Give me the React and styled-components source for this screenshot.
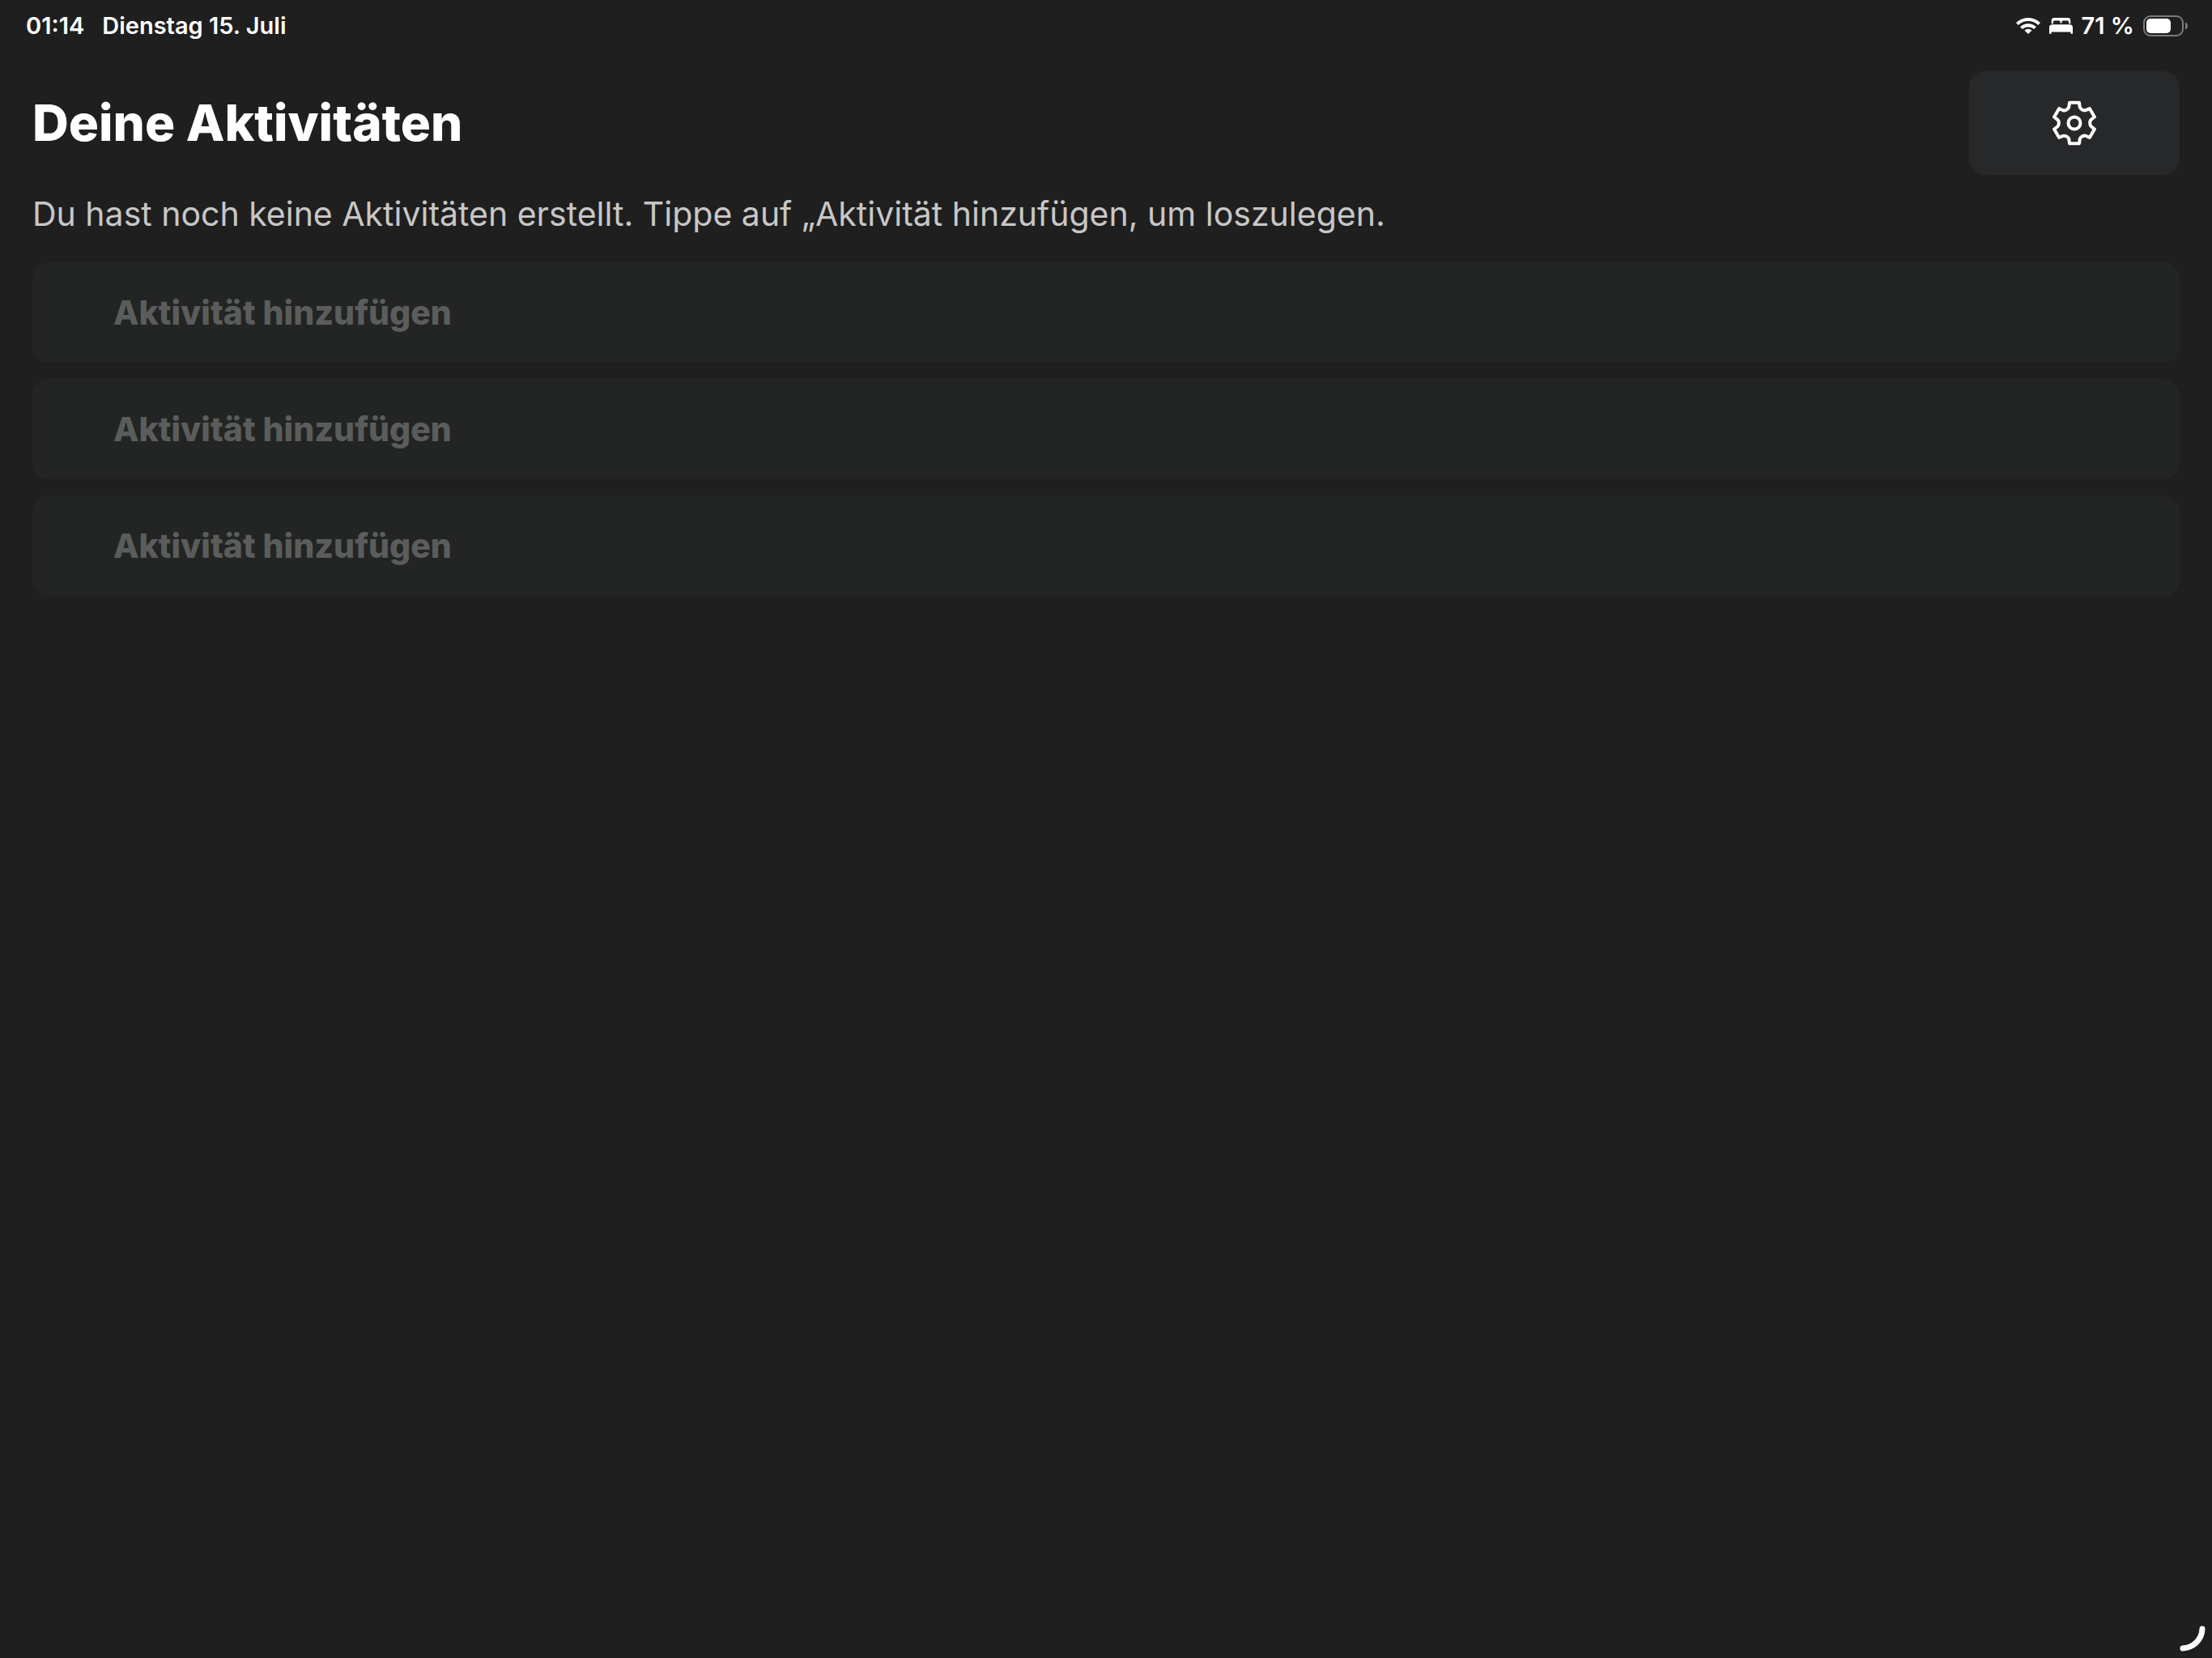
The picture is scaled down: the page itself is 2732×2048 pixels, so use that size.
import React from "react";
import styled, { createGlobalStyle } from "styled-components";

const GlobalStyle = createGlobalStyle`
  *, *::before, *::after { box-sizing: border-box; }
  body {
    margin: 0;
    background: #1f1f1f;
    color: #ffffff;
    font-family: Inter, "Open Sans", sans-serif;
    -webkit-font-smoothing: antialiased;
  }
`;

const Page = styled.div`
  min-height: 100vh;
  display: flex;
  flex-direction: column;
`;

const StatusBar = styled.header`
  display: flex;
  justify-content: space-between;
  align-items: center;
  height: 64px;
  padding: 0 30px 0 32px;
  font-size: 29px;
  font-weight: 600;
  line-height: 32px;
`;

const StatusGroup = styled.div`
  display: flex;
  align-items: center;
  gap: ${(p) => p.$gap}px;
`;

const Main = styled.main`
  display: flex;
  flex-direction: column;
  padding: 24px 40px 0;
`;

const TitleRow = styled.div`
  display: flex;
  justify-content: space-between;
  align-items: center;
`;

const Title = styled.h1`
  margin: 0;
  font-size: 62px;
  font-weight: 800;
  line-height: 72px;
`;

const SettingsButton = styled.button`
  display: flex;
  align-items: center;
  justify-content: center;
  width: 260px;
  height: 128px;
  padding: 0;
  border: 0;
  border-radius: 20px;
  background: #27282a;
  color: inherit;
`;

const Hint = styled.p`
  margin: 16px 0 28px;
  color: #c7c7c7;
  font-size: 41px;
  font-weight: 400;
  line-height: 64px;
`;

const ActivityList = styled.ul`
  display: flex;
  flex-direction: column;
  gap: 20px;
  margin: 0;
  padding: 0;
  list-style: none;
`;

const ActivityButton = styled.button`
  display: block;
  width: 100%;
  height: 124px;
  padding: 0 100px;
  border: 0;
  border-radius: 20px;
  background: #232524;
  color: #5b5d5c;
  font-family: inherit;
  font-size: 41px;
  font-weight: 800;
  line-height: 64px;
  text-align: left;
`;

const Footer = styled.footer`
  display: flex;
  justify-content: flex-end;
  margin-top: auto;
  padding: 0 8px 8px;
`;

const WifiIcon = () => (
  <svg width="30" height="20" viewBox="0 0 30 20" fill="none" stroke="#fff" strokeWidth="4" aria-hidden="true">
    <path d="M1.4 7.6a19.3 19.3 0 0 1 27.2 0" />
    <path d="M6.4 12.7a12.2 12.2 0 0 1 17.2 0" />
    <path d="M15 20l-4.600-4.400a6.500 6.500 0 0 1 9.200 0z" fill="#fff" stroke="none" />
  </svg>
);

const BedIcon = () => (
  <svg width="29" height="20" viewBox="0 0 29 20" fill="#fff" aria-hidden="true">
    <path d="M2.700 7.300V3.500A3.500 3.500 0 0 1 6.200 0h16.600A3.500 3.500 0 0 1 26.300 3.500V7.300h-2.300V5a1.500 1.500 0 0 0-1.500-1.500h-5.500a1.500 1.500 0 0 0-1.500 1.500V6.500h-2V5A1.500 1.500 0 0 0 12 3.500H6.500a1.500 1.500 0 0 0-1.500 1.500V7.300z" />
    <path d="M0 12.300A4 4 0 0 1 4 8.300h21a4 4 0 0 1 4 4V18.700a1.300 1.300 0 0 1-2.600 0V17.500H2.600v1.200a1.300 1.300 0 0 1-2.600 0z" />
  </svg>
);

const BatteryIcon = () => (
  <svg width="55" height="26" viewBox="0 0 55 26" aria-hidden="true">
    <rect x="1" y="1" width="48" height="24" rx="8" fill="none" stroke="#7b7b7b" strokeWidth="2" />
    <rect x="4" y="4" width="30" height="18" rx="5" fill="#fff" />
    <path d="M52 8.500c4 1.500 4 7.500 0 9z" fill="#7b7b7b" />
  </svg>
);

const TOOTH = [[-18, -76], [18, -76], [20, -60], [22, -52], [34, -45], [42, -47.5]];

const gearPath = () => {
  const parts = [];
  for (let k = 0; k < 6; k += 1) {
    const a = (k * Math.PI) / 3;
    const [p0, p1, p2, c1, c2, p3] = TOOTH.map(([x, y]) =>
      `${(x * Math.cos(a) - y * Math.sin(a)).toFixed(2)} ${(x * Math.sin(a) + y * Math.cos(a)).toFixed(2)}`
    );
    parts.push(`${k ? "L" : "M"}${p0}L${p1}L${p2}C${c1} ${c2} ${p3}`);
  }
  return `${parts.join("")}Z`;
};

const GearIcon = () => (
  <svg width="56" height="56" viewBox="-84 -84 168 168" fill="none" stroke="#fff" strokeWidth="12" strokeLinejoin="round" aria-hidden="true">
    <path d={gearPath()} />
    <circle r="22.500" />
  </svg>
);

const CornerArc = () => (
  <svg width="32" height="32" viewBox="0 0 32 32" fill="none" stroke="#fff" strokeWidth="7" strokeLinecap="round" aria-hidden="true">
    <path d="M28 4A25 25 0 0 1 4 28" />
  </svg>
);

const activities = ["Aktivität hinzufügen", "Aktivität hinzufügen", "Aktivität hinzufügen"];

export default function App() {
  return (
    <Page>
      <GlobalStyle />
      <StatusBar>
        <StatusGroup $gap={22}>
          <span>01:14</span>
          <span>Dienstag 15. Juli</span>
        </StatusGroup>
        <StatusGroup $gap={11}>
          <WifiIcon />
          <BedIcon />
          <span>71 %</span>
          <BatteryIcon />
        </StatusGroup>
      </StatusBar>
      <Main>
        <TitleRow>
          <Title>Deine Aktivitäten</Title>
          <SettingsButton type="button" aria-label="Einstellungen">
            <GearIcon />
          </SettingsButton>
        </TitleRow>
        <Hint>Du hast noch keine Aktivitäten erstellt. Tippe auf „Aktivität hinzufügen, um loszulegen.</Hint>
        <ActivityList>
          {activities.map((label, i) => (
            <li key={i}>
              <ActivityButton type="button" disabled>{label}</ActivityButton>
            </li>
          ))}
        </ActivityList>
      </Main>
      <Footer>
        <CornerArc />
      </Footer>
    </Page>
  );
}
